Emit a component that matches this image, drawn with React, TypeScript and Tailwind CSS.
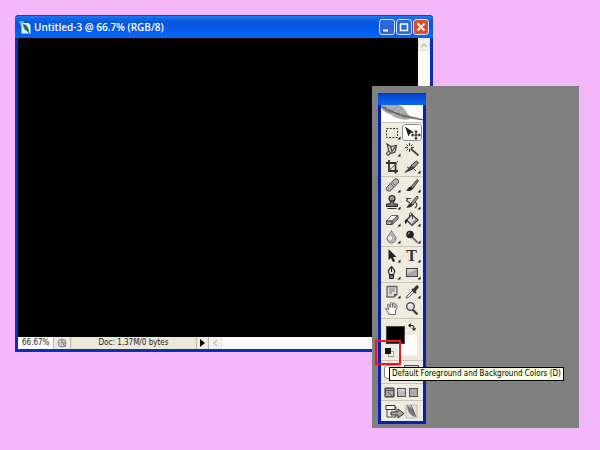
import type { ReactNode } from "react";

type Tool = {
  name: string;
  art: ReactNode;
  more?: boolean;
  active?: boolean;
};

const groups: Tool[][] = [
  [
    {
      name: "Rectangular Marquee",
      more: true,
      art: <rect x="4.5" y="4.5" width="11" height="9" fill="none" stroke="#333" strokeDasharray="2 1.3" />,
    },
    {
      name: "Move",
      active: true,
      art: (
        <>
          <path d="M3 2.500 12 8.500 8.500 9 6.500 12.500Z" fill="#222" />
          <path d="M14 7v8M10.500 11h7" stroke="#222" strokeWidth="1.100" />
          <path d="m14 6 2 2.200h-4zM14 16l2-2.200h-4zM9 11l2.200-2v4zM19 11l-2.200-2v4z" fill="#222" />
        </>
      ),
    },
    {
      name: "Polygonal Lasso",
      more: true,
      art: (
        <>
          <path d="m5 3 4 2.500L14.500 4.500 13 11l-4 1.500-2-2Z" fill="#e4e0d4" stroke="#444" strokeWidth="1.200" />
          <path d="m8.500 5.500 1.500 5 3.500-5M6.500 10l-2 2.500 1.500 2 3-2.500" fill="none" stroke="#444" strokeWidth="1.200" />
        </>
      ),
    },
    {
      name: "Magic Wand",
      art: (
        <>
          <path d="m8.500 7.500 8 7" stroke="#444" strokeWidth="1.800" />
          <path d="M7.500 2v3M7.500 8v3M3 6.500h3M9 6.500h3M4.500 3.500l1.500 1.500M10.500 3.500 9 5M4.500 9.500 6 8" stroke="#333" />
        </>
      ),
    },
    {
      name: "Crop",
      art: (
        <>
          <path d="M7 2v11h9M4 5h9.500v10.500" fill="none" stroke="#333" strokeWidth="1.800" />
          <path d="M7 13 16 3" stroke="#555" />
        </>
      ),
    },
    {
      name: "Slice",
      more: true,
      art: (
        <>
          <path d="m3 14.500 6-6.500 3 2.500Z" fill="#444" stroke="#222" strokeWidth=".700" />
          <path d="m9 7.500 5.500-4.500 2 1.500-4.500 5.500Z" fill="#999" stroke="#333" />
          <path d="m5 9 2 1M12 11l2 2" stroke="#444" />
        </>
      ),
    },
  ],
  [
    {
      name: "Healing Brush",
      more: true,
      art: (
        <>
          <ellipse cx="6.500" cy="10" rx="4.500" ry="4" fill="#fff" stroke="#999" strokeDasharray="1 1" />
          <path d="m7 11.500 7-7" stroke="#555" strokeWidth="6" strokeLinecap="round" />
          <path d="m7 11.500 7-7" stroke="#b4b4b4" strokeWidth="4.400" strokeLinecap="round" />
          <path d="m9 7 3 3M10.500 5.500l3 3" stroke="#555" strokeWidth=".800" />
        </>
      ),
    },
    {
      name: "Brush",
      more: true,
      art: (
        <>
          <path d="m9 10 6-7.500 1.500 1-5.500 8Z" fill="#888" stroke="#333" strokeWidth=".900" />
          <path d="M3.500 13.500C6 13 6 9.500 9 9.500l2 2c-1 2.500-5 3-7.500 2Z" fill="#222" />
        </>
      ),
    },
    {
      name: "Clone Stamp",
      more: true,
      art: (
        <>
          <circle cx="10" cy="4.500" r="3" fill="#999" stroke="#222" strokeWidth="1.200" />
          <path d="M8.500 7h3l.5 3h3.500v2.500h-11V10H8Z" fill="#777" stroke="#222" />
          <path d="M5.500 14.500h9" stroke="#333" />
        </>
      ),
    },
    {
      name: "History Brush",
      more: true,
      art: (
        <>
          <path d="M4 4.500h5M6 4.500 4.500 6.500 8 9M12.500 8c3 1 3 4 .5 6" fill="none" stroke="#444" strokeWidth="1.200" />
          <path d="m9 9 6-7 1.500 1-5.500 8Z" fill="#999" stroke="#444" strokeWidth=".900" />
          <path d="M4 13.500C6 13 6.500 9 9 9l2 2c-1 2.500-4.500 3-7 2.500Z" fill="#333" />
        </>
      ),
    },
    {
      name: "Eraser",
      more: true,
      art: (
        <>
          <path d="m4.500 10 5-5.500H16l-6 5.500Z" fill="#f8f8f8" stroke="#666" />
          <path d="M4.500 10H10v3.500H4.500zM10 10l6-5.500V8l-6 5.500Z" fill="#aaa" stroke="#444" />
        </>
      ),
    },
    {
      name: "Paint Bucket",
      more: true,
      art: (
        <>
          <path d="m4.500 9 5.500-5.500 6 5.500-6 5.500Z" fill="#ddd" stroke="#333" strokeWidth="1.200" />
          <path d="M10.500 8V3.500c0-2-3-2-3 0V6" fill="none" stroke="#333" />
          <path d="M4.500 8.500C1.500 9 3 11 3.500 13.500L6 9" fill="#222" />
          <path d="m9.500 12.500 4-4.500 2 1-5 4.500Z" fill="#888" />
        </>
      ),
    },
    {
      name: "Blur",
      more: true,
      art: (
        <>
          <path d="M9.500 2.500c1 3 4.500 5.500 4.500 8a4.300 4.300 0 0 1-9 0c0-2.500 3.500-5 4.500-8Z" fill="#b4b4b4" stroke="#777" />
          <circle cx="8" cy="10" r="2" fill="#f4f4f4" />
        </>
      ),
    },
    {
      name: "Burn",
      more: true,
      art: (
        <>
          <path d="m9 8 6.500 6.500" stroke="#777" strokeWidth="2" />
          <circle cx="8" cy="6.500" r="3.800" fill="#222" />
          <circle cx="6.800" cy="5.300" r="1" fill="#999" />
        </>
      ),
    },
  ],
  [
    {
      name: "Path Selection",
      more: true,
      art: <path d="M6.500 2v11l2.500-2 2 4 2-1-2-4h3.500Z" fill="#222" />,
    },
    { name: "Type", more: true, art: null },
    {
      name: "Pen",
      more: true,
      art: (
        <>
          <path d="M9.500 2.500c4 4 4 5 1.900 8H7.600c-2-3-2-4 1.900-8Z" fill="#ddd" stroke="#333" strokeWidth="1.200" />
          <path d="M9.500 3v5M7.500 11h4v3.500h-4Z" fill="#777" stroke="#222" />
        </>
      ),
    },
    {
      name: "Rectangle",
      more: true,
      art: (
        <>
          <rect x="4.500" y="4.500" width="11" height="8" fill="#aaa" stroke="#444" />
          <path d="M5 5h10L5 10Z" fill="#d0d0d0" />
        </>
      ),
    },
  ],
  [
    {
      name: "Notes",
      more: true,
      art: (
        <>
          <path d="M5 3.500h10v8L12 14H5Z" fill="#ddd" stroke="#666" strokeWidth="1.300" />
          <path d="M7 6h6M7 8h6M7 10h3" stroke="#777" />
          <path d="M12 14v-3h3Z" fill="#555" />
        </>
      ),
    },
    {
      name: "Eyedropper",
      more: true,
      art: (
        <>
          <path d="m5 13 6-6 1.500 1.500-6 6L4 15Z" fill="#eee" stroke="#555" />
          <path d="m10 6 4 4" stroke="#333" strokeWidth="2" />
          <path d="m12.500 7 2.500-3" stroke="#333" strokeWidth="3.400" strokeLinecap="round" />
        </>
      ),
    },
    {
      name: "Hand",
      art: (
        <path
          d="M7 14.500c0-2-3-4-3.500-6 1-1 2 .5 3 1.500L5.500 4.500c.8-1.300 1.700-.5 2.500 3L8.500 3c1-1.200 1.700-.6 1.800 0v4.500L11.500 3.500c1-1 1.700-.4 1.700.5l-.7 4 1.500-2.500c1-.6 1.600 0 1.300 1L13.500 11v3.500Z"
          fill="#fff"
          stroke="#666"
        />
      ),
    },
    {
      name: "Zoom",
      art: (
        <>
          <path d="m10.500 9.500 5 5" stroke="#444" strokeWidth="2.400" />
          <circle cx="8.500" cy="6.500" r="3.800" fill="#ddd" stroke="#444" strokeWidth="1.300" />
          <path d="M6.500 6.500a2 2 0 0 1 2-2" fill="none" stroke="#fff" strokeWidth="1.300" />
        </>
      ),
    },
  ],
];

const ToolButton = ({ tool }: { tool: Tool }) => (
  <button
    aria-label={tool.name}
    className={
      tool.active
        ? "h-[17px] w-5 rounded-[3px] bg-white outline outline-1 -outline-offset-1 outline-[#8a8d94]"
        : "h-[17px] w-5"
    }
  >
    <svg viewBox="0 0 20 17" className="block h-[17px] w-5">
      {tool.art}
      {tool.name === "Type" && (
        <text x="9.500" y="14" textAnchor="middle" fill="#333" className="font-['Liberation_Serif',serif] text-[16px] font-bold">
          T
        </text>
      )}
      {tool.more && <path d="M18.500 12.500v3h-3Z" fill="#111" />}
    </svg>
  </button>
);

const Feather = () => (
  <svg viewBox="0 0 42 17" className="block h-[17px] w-[42px] bg-white">
    <path d="M0 0h17c5 1 7 4 9 8l3 3 13 3v1l-13-1c-3 1-8 1-12-1-4 0-5-3-9-4C5 8 2 5 0 3Z" fill="#a6a6a6" />
    <path d="M0 2c3 3 8 6 14 7 5 3 9 4 15 4-5-3-9-3-15-6C9 5 4 3 0 0Z" fill="#7c7c7c" />
    <path d="M3 2c8 5 16 8 26 10l13 3" fill="none" stroke="#5a5a5a" />
    <path d="m9 5 5-4M14 7l5-5M19 9l5-4M6 4l4-3M8 8l6 1M14 10l7 2" stroke="#c6c6c6" strokeWidth=".700" />
  </svg>
);

const ColorSwatches = () => (
  <div className="relative h-[42px] border-b border-[#c9c5b5]">
    <button aria-label="Background color" className="absolute top-4 left-[17px] h-5 w-[19px] bg-white" />
    <button aria-label="Foreground color" className="absolute top-[7px] left-[5px] h-[18px] w-[19px] border border-[#444] bg-black" />
    <button aria-label="Switch colors" className="absolute top-1 left-[27px]">
      <svg viewBox="0 0 10 10" className="block size-2">
        <path d="M2 3h3c2 0 2.500 1 2.500 4" fill="none" stroke="#222" strokeWidth="1.300" />
        <path d="M0 3 3.500 0v6ZM7.500 10 4.500 6.500h6Z" fill="#222" />
      </svg>
    </button>
    <button aria-label="Default colors" className="absolute top-[29px] left-1">
      <svg viewBox="0 0 10 10" className="block size-[10px]">
        <rect x="3.500" y="3.500" width="5" height="5" fill="#fff" stroke="#999" />
        <rect width="6" height="6" fill="#111" />
      </svg>
    </button>
  </div>
);

const Toolbox = () => (
  <div className="w-12 border-[3px] border-t-0 border-[#0620b0] bg-[#efecdf]">
    <div className="-mx-[3px] h-3 border-t border-[#0a3cc0] bg-linear-to-b from-[#0444c8] to-[#0a66f4]" />
    <Feather />
    <div className="h-0.5 border-t border-[#c9c5b5]" />
    {groups.map((tools) => (
      <div key={tools[0].name} className="flex flex-wrap border-b border-[#c9c5b5] px-px pb-px">
        {tools.map((tool) => (
          <ToolButton key={tool.name} tool={tool} />
        ))}
      </div>
    ))}
    <ColorSwatches />
    <div className="flex gap-1 border-b border-[#c9c5b5] px-[3px] pt-1 pb-1">
      <button aria-label="Standard mode" className="h-[14px] w-4 rounded-[3px] border border-[#888] bg-white" />
      <button aria-label="Quick mask mode" className="h-[14px] w-[15px] border border-[#555] bg-[#ccc]" />
    </div>
    <div className="flex h-[17px] items-center border-b border-[#c9c5b5] pl-[3px]">
      <button aria-label="Standard screen" className="rounded-[2px] border border-[#888] bg-white">
        <svg viewBox="0 0 9 9" className="block size-[9px]">
          <rect x=".5" y=".5" width="8" height="8" fill="#aaa" stroke="#555" />
          <path d="M1 2.500h7M3 4l4 4" stroke="#555" />
        </svg>
      </button>
      <button aria-label="Full screen with menu bar" className="ml-0.5">
        <svg viewBox="0 0 9 9" className="block size-[9px]">
          <rect x=".5" y=".5" width="8" height="8" fill="#bbb" stroke="#555" />
          <path d="M1 2h7" stroke="#eee" />
        </svg>
      </button>
      <button aria-label="Full screen" className="ml-[3px]">
        <svg viewBox="0 0 9 9" className="block size-[9px]">
          <rect x=".5" y=".5" width="8" height="8" fill="#aaa" stroke="#555" />
        </svg>
      </button>
    </div>
    <button aria-label="Edit in ImageReady" className="block">
      <svg viewBox="0 0 42 20" className="block h-5 w-[42px]">
        <path d="M6 6h9v10H6Z" fill="#eee" stroke="#444" />
        <path d="M5 4.500h9v4H5Z" fill="#fff" stroke="#333" />
        <path d="M10 11h7V8l6 4.500-6 4.500v-3h-7Z" fill="#aaa" stroke="#333" />
        <path d="M25 4h11v13H25Z" fill="#e4e4e4" stroke="#bbb" />
        <path d="M26 4c6 3 7 6 8 12-5-2-8-6-8-12Z" fill="#777" />
        <path d="m30 4 5 12" stroke="#555" />
      </svg>
    </button>
  </div>
);

const captionButton = "flex size-4 items-center justify-center rounded-[3px] border border-[#d5e2fb]";

const DocumentWindow = () => (
  <section className="absolute top-[15px] right-[167px] left-[15px] rounded-t-[4px] bg-[#0a2fb8] px-[3px] pb-[3px]">
    <header className="-mx-[3px] flex h-[23px] items-center rounded-t-[4px] border-t border-[#1648b8] bg-linear-to-b from-[#1c78f0] via-[#0654dc] via-30% to-[#0666fa] px-1">
      <svg viewBox="0 0 12 13" className="mr-[3px] h-[13px] w-3">
        <path d="M2.500 2h7l2 2v8.500h-9Z" fill="#e8f4f4" />
        <path d="M4 3c4 0 6 4 6 8-4-1-6-4-6-8Z" fill="#2b8a70" />
        <path d="m5 4 5 8" stroke="#174f60" />
        <path d="M0 1h5M1 3h2" stroke="#b8e0f4" />
      </svg>
      <h1 className="font-['Open_Sans',sans-serif] text-[10px] font-semibold whitespace-nowrap text-white">
        Untitled-3 @ 66.7% (RGB/8)
      </h1>
      <div className="ml-auto flex gap-px">
        <button aria-label="Minimize" className={`${captionButton} bg-[#2c66de]`}>
          <svg viewBox="0 0 14 14" className="block size-[14px]">
            <path d="M3 10.500h5" stroke="#fff" strokeWidth="2" />
          </svg>
        </button>
        <button aria-label="Maximize" className={`${captionButton} bg-[#2c66de]`}>
          <svg viewBox="0 0 14 14" className="block size-[14px]">
            <path d="M3.500 4v6.500h7V4M3 4h8" fill="none" stroke="#fff" strokeWidth="1.500" />
          </svg>
        </button>
        <button aria-label="Close" className={`${captionButton} bg-[#df4e2a]`}>
          <svg viewBox="0 0 14 14" className="block size-[14px]">
            <path d="m3.500 3.500 7 7m0-7-7 7" stroke="#fff" strokeWidth="1.800" />
          </svg>
        </button>
      </div>
    </header>
    <div className="flex h-[299px]">
      <div className="flex-1 bg-black" />
      <div className="w-3 bg-[#fbfbf7]">
        <button aria-label="Scroll up" className="flex h-[13px] w-full items-center justify-center rounded-[2px] border border-[#e4e2d8] bg-[#f3f2ec]">
          <svg viewBox="0 0 8 6" className="block h-1.5 w-2">
            <path d="m1 5 3-3 3 3" fill="none" stroke="#bbb8ac" strokeWidth="1.500" />
          </svg>
        </button>
      </div>
    </div>
    <footer className="flex h-3 bg-[#fbfbf7] font-['DejaVu_Sans_Condensed','DejaVu_Sans',sans-serif] text-[8px] leading-3 text-[#222]">
      <input aria-label="Zoom level" defaultValue="66.67%" className="w-[35px] bg-white pl-1" />
      <button aria-label="Version cue" className="flex w-[18px] items-center justify-center border-x border-[#bbb8a8] bg-[#efecdf]">
        <svg viewBox="0 0 10 10" className="block size-[10px]">
          <circle cx="5" cy="5" r="4" fill="#ccc" stroke="#888" />
          <path d="M5 2v3h4M6 6l3 3" fill="none" stroke="#777" />
        </svg>
      </button>
      <p className="w-[125px] bg-[#ece9d8] text-center">Doc: 1.37M/0 bytes</p>
      <button aria-label="Status options" className="flex w-[13px] items-center justify-center border-x border-[#bbb8a8] bg-[#efecdf]">
        <svg viewBox="0 0 5 8" className="block h-2 w-[5px]">
          <path d="M0 0v8l5-4Z" fill="#000" />
        </svg>
      </button>
      <button aria-label="Scroll left" className="flex w-[13px] items-center justify-center border-r border-[#e4e2d8] bg-[#f3f2ec]">
        <svg viewBox="0 0 6 8" className="block h-2 w-1.5">
          <path d="M5 1 2 4l3 3" fill="none" stroke="#c4c1b6" strokeWidth="1.300" />
        </svg>
      </button>
    </footer>
  </section>
);

export default function App() {
  return (
    <main className="relative min-h-screen overflow-hidden bg-[#f2b8fa]">
      <DocumentWindow />
      <section className="absolute top-[86px] right-[21px] left-[372px] bg-[#808080] px-1.5 pt-[7px] pb-1">
        <Toolbox />
        <div className="absolute top-[254px] left-[3px] h-[25px] w-[26px] border-2 border-[#f01820]" />
        <div
          role="tooltip"
          className="absolute top-[281px] left-[17px] border border-black bg-[#ffffe1] px-0.5 font-['DejaVu_Sans_Condensed','DejaVu_Sans',sans-serif] text-[8px] leading-3 whitespace-nowrap text-black"
        >
          Default Foreground and Background Colors (D)
        </div>
      </section>
    </main>
  );
}
